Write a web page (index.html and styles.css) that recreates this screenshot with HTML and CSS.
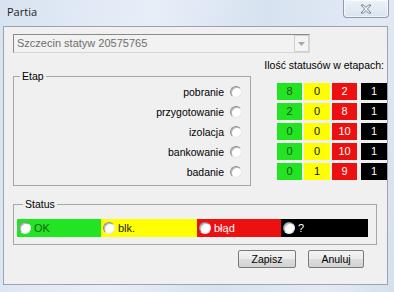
FILE: index.html
```html
<!DOCTYPE html>
<html lang="pl">
<head>
<meta charset="utf-8">
<title>Partia</title>
<link rel="stylesheet" href="styles.css">
</head>
<body>
<div class="window">
  <div class="titlebar">
    <span class="title">Partia</span>
    <div class="close">
      <svg width="12" height="10" viewBox="0 0 12 10"><polygon points="1,1 3.6,1 6,3.5 8.4,1 11,1 7.4,5 11,9 8.4,9 6,6.5 3.6,9 1,9 4.6,5" fill="#f4f7fb" stroke="#58677c" stroke-width="0.8" stroke-linejoin="round"/></svg>
    </div>
  </div>
  <div class="client">
    <div class="combo">
      <span class="combo-text">Szczecin statyw 20575765</span>
      <span class="combo-btn"><svg width="7" height="4" viewBox="0 0 7 4"><polygon points="0,0 7,0 3.5,4" fill="#a8a8a8"/></svg></span>
    </div>
    <div class="counts-label">Ilość statusów w etapach:</div>
    <div class="main-row">
      <fieldset class="group etap">
        <legend>Etap</legend>
        <div class="stage-row"><span>pobranie</span><span class="radio"></span></div>
        <div class="stage-row"><span>przygotowanie</span><span class="radio"></span></div>
        <div class="stage-row"><span>izolacja</span><span class="radio"></span></div>
        <div class="stage-row"><span>bankowanie</span><span class="radio"></span></div>
        <div class="stage-row"><span>badanie</span><span class="radio"></span></div>
      </fieldset>
      <div class="grid">
        <div class="cell g">8</div><div class="cell y">0</div><div class="cell r">2</div><div class="cell k">1</div>
        <div class="cell g">2</div><div class="cell y">0</div><div class="cell r">8</div><div class="cell k">1</div>
        <div class="cell g">0</div><div class="cell y">0</div><div class="cell r">10</div><div class="cell k">1</div>
        <div class="cell g">0</div><div class="cell y">0</div><div class="cell r">10</div><div class="cell k">1</div>
        <div class="cell g">0</div><div class="cell y">1</div><div class="cell r">9</div><div class="cell k">1</div>
      </div>
    </div>
    <fieldset class="group status">
      <legend>Status</legend>
      <div class="status-bar">
        <label class="seg seg-ok"><span class="radio"></span>OK</label>
        <label class="seg seg-blk"><span class="radio"></span>blk.</label>
        <label class="seg seg-err"><span class="radio"></span>błąd</label>
        <label class="seg seg-unk"><span class="radio"></span>?</label>
      </div>
    </fieldset>
    <div class="buttons">
      <button class="btn btn-save">Zapisz</button>
      <button class="btn btn-cancel">Anuluj</button>
    </div>
  </div>
</div>
</body>
</html>
```
FILE: styles.css
```css
html, body {
  margin: 0;
  padding: 0;
}
body {
  width: 394px;
  height: 292px;
  overflow: hidden;
  font-family: "Liberation Sans", Arial, sans-serif;
  font-size: 10.5px;
  color: #000;
}
.window {
  width: 394px;
  height: 292px;
  background: linear-gradient(100deg, #d8e3f1 0%, #e7eef8 35%, #d7e2f0 60%, #e2eaf5 85%, #d5e0ee 100%);
}
.titlebar {
  height: 26px;
  display: flex;
  align-items: flex-start;
}
.title {
  font-family: "Open Sans", "Liberation Sans", sans-serif;
  font-size: 11px;
  line-height: 14px;
  padding: 5px 0 0 7px;
  color: #1b1b1b;
}
.close {
  margin-left: auto;
  margin-right: 5px;
  width: 46px;
  height: 18px;
  box-sizing: border-box;
  border: 1px solid #8d9ab0;
  border-top: none;
  border-radius: 0 0 4px 4px;
  background: linear-gradient(#eef3f9, #dae3ef);
  box-shadow: inset 0 0 0 1px rgba(255,255,255,0.6);
  display: flex;
  align-items: center;
  justify-content: center;
}
.client {
  margin-left: 3px;
  width: 385px;
  height: 259px;
  box-sizing: border-box;
  border: 1px solid #9aa3ae;
  background: #f0f0f0;
  padding: 7px 0 0 9px;
}
.combo {
  width: 297px;
  height: 19px;
  box-sizing: border-box;
  border: 1px solid;
  border-color: #8a8a8a #d6d6d6 #d6d6d6 #8a8a8a;
  background: #f2f2f2;
  display: flex;
  align-items: stretch;
}
.combo-text {
  flex: 1;
  padding-left: 3px;
  font-size: 11px;
  line-height: 17px;
  color: #6d6d6d;
}
.combo-btn {
  width: 15px;
  box-sizing: border-box;
  border: 1px solid #cfcfcf;
  background: #f4f4f4;
  display: flex;
  align-items: center;
  justify-content: center;
}
.counts-label {
  margin-top: 7px;
  line-height: 11px;
  height: 11px;
  text-align: right;
  padding-right: 3px;
}
.main-row {
  display: flex;
  align-items: flex-start;
}
.group {
  margin: 0;
  box-sizing: border-box;
  border: 1px solid #a6a6a6;
  min-width: 0;
}
.group legend {
  margin-left: 6px;
  padding: 0 2px;
  line-height: 11px;
}
.etap {
  width: 238px;
  padding: 0 8px 3px 0;
}
.stage-row {
  height: 20px;
  display: flex;
  align-items: center;
  justify-content: flex-end;
  gap: 6px;
}
.radio {
  width: 12px;
  height: 12px;
  box-sizing: border-box;
  border-radius: 50%;
  border: 1px solid;
  border-color: #8c8c8c #e6e6e6 #e6e6e6 #8c8c8c;
  background: #ffffff;
  box-shadow: inset 1px 1px 0 #b9b9b9;
  flex: none;
}
.grid {
  margin-left: 26px;
  margin-top: 12px;
  display: grid;
  grid-template-columns: 25px 26px 25px 28px;
  grid-auto-rows: 17px;
  column-gap: 2px;
  row-gap: 3px;
}
.cell {
  text-align: center;
  line-height: 17px;
  font-size: 11px;
}
.g { background: #22e422; color: #1d4f1d; }
.y { background: #ffff00; color: #111; }
.r { background: #ec1010; color: #fff; }
.k { background: #000; color: #fff; margin-left: 2px; }
.status {
  width: 364px;
  margin-top: 13px;
  padding: 9px 0 7px 3px;
}
.status-bar {
  display: flex;
  height: 18px;
}
.seg {
  display: flex;
  align-items: center;
  gap: 3px;
  padding-left: 2px;
  box-sizing: border-box;
  font-size: 11px;
}
.seg-ok { width: 84px; background: #22e422; color: #1d5a1d; }
.seg-blk { width: 96px; background: #ffff00; color: #222; }
.seg-err { width: 84px; background: #ec1010; color: #fff; }
.seg-unk { width: 87px; background: #000; color: #fff; }
.buttons {
  margin-top: 5px;
  display: flex;
  justify-content: flex-end;
  gap: 12px;
  padding-right: 23px;
}
.btn {
  height: 18px;
  box-sizing: border-box;
  padding: 0;
  font-family: "Liberation Sans", Arial, sans-serif;
  font-size: 10.5px;
  color: #000;
  border: 1px solid #7a7a7a;
  border-radius: 2px;
  background: linear-gradient(#f3f3f3 0%, #ebebeb 50%, #dddddd 51%, #d2d2d2 100%);
}
.btn-save { width: 58px; }
.btn-cancel { width: 56px; }
```
